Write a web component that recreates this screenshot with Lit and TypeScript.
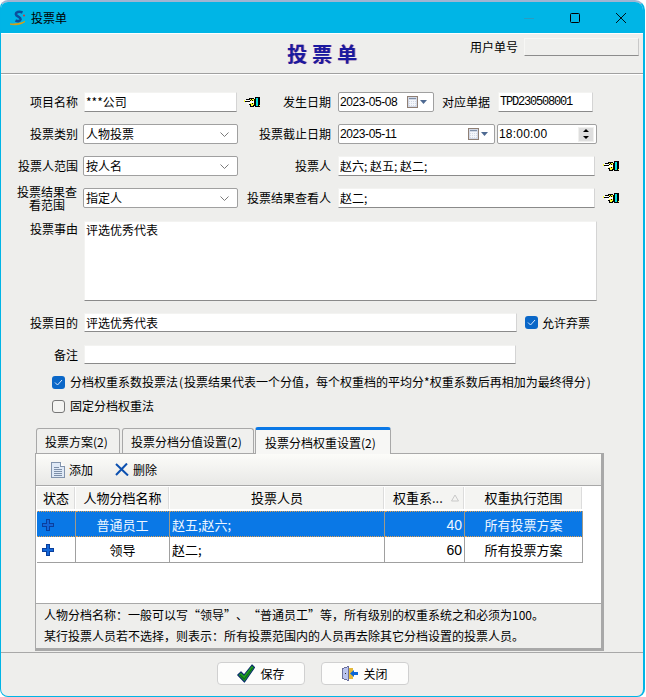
import { LitElement, html, css, svg } from "lit";
import { customElement } from "lit/decorators.js";

const hand = () => html`<svg class="hand" viewBox="0 0 17 11" width="17" height="11" shape-rendering="crispEdges">
  <path fill="#000" d="M5 1h5v1h1V0h5v10h-5V9h-1v1H6V8H5V6H2V5H0V3h2V2h3z"/>
  <path fill="#fff" d="M1 3h5v1H1zM2 5h4V4h4v2H6v1H3z" opacity="1"/>
  <path fill="#ffff30" d="M0 3h1v2H0zM6 2h1v1H6zM8 2h2v1H8zM7 3h1v1H7zM9 3h1v1H9zM6 6h2v1H6zM9 6h1v1H9zM7 7h3v1H7zM7 9h2v-1H7z"/>
  <path fill="#00e0e0" d="M12 1h2v8h-2z"/>
  <path fill="#ffff30" d="M15 8h1v1h-1z"/>
</svg>`;

const chevron = () => html`<svg class="chev" viewBox="0 0 9 5" width="9" height="5"><path d="M.5.5 4.5 4.5 8.5.5" fill="none" stroke="#7a7a7a" stroke-width="1"/></svg>`;

const cal = () => html`<svg class="cal" viewBox="0 0 21 12" width="21" height="12" shape-rendering="crispEdges">
  <rect x=".5" y=".5" width="10" height="11" fill="#d3d9e6" stroke="#8f7f74"/>
  <path d="M2 2h7v1H2z" fill="#8090a8"/>
  <path d="M2 4.500h7M2 6.500h7M2 8.500h7M3.500 4v6M5.500 4v6M7.500 4v6" stroke="#f4f6fa" fill="none"/>
  <path d="M13 4h7l-3.500 4z" fill="#4f6a92" shape-rendering="auto"/>
</svg>`;

const plus = () => html`<svg viewBox="0 0 13 13" width="12" height="12" shape-rendering="crispEdges">
  <path fill="#0a3f9c" d="M4 0h5v4h4v5H9v4H4V9H0V4h4z"/>
  <path fill="#1467d8" d="M5 1h3v4h4v3H8v4H5V8H1V5h4z"/>
</svg>`;

const doc = () => html`<svg viewBox="0 0 14 16" width="14" height="16" shape-rendering="crispEdges">
  <path d="M.5.5h9l4 4v11H.5z" fill="#dfe9f6" stroke="#8294ad"/>
  <path d="M9.500.5v4h4" fill="#fff" stroke="#8294ad"/>
  <path d="M3 5h5M3 7h8M3 9h8M3 11h8M3 13h8" stroke="#7d8fa8" fill="none"/>
</svg>`;

const del = () => html`<svg viewBox="0 0 14 13" width="14" height="13">
  <path d="M1 1 13 12.500M12 .5 1 12" stroke="#0c50b0" stroke-width="2" fill="none"/>
</svg>`;

const check = () => html`<svg viewBox="0 0 18 19" width="18" height="19">
  <path d="M.8 11 4 8 7 11 15 1 17.500 3.500 7.500 18z" fill="#1fa51f" stroke="#0b2f6a" stroke-width="1.200" stroke-linejoin="round"/>
  <path d="M3 11 7.200 15 15.500 4" fill="none" stroke="#0c6d18" stroke-width="1.200"/>
</svg>`;

const door = () => html`<svg viewBox="0 0 16 15" width="16" height="15" shape-rendering="crispEdges">
  <path d="M.5 2.500 6.500.5v14l-6-2z" fill="#b9c3ee" stroke="#6a6f9a"/>
  <path d="M7 2h4v11H7z" fill="#e3b93a"/>
  <path d="M3 7h1v1H3z" fill="#333"/>
  <path d="M8 7.500 12 4v2h4v3h-4v2z" fill="#0a66d8" shape-rendering="auto"/>
</svg>`;

const logo = () => html`<svg viewBox="0 0 16 16" width="16" height="16">
  <path d="M12.500 2.500C9 1 5.500 2 6 4.500 6.500 7 11 6.500 10.500 9.500 10 11.500 7.500 11.500 5.500 10.500" fill="none" stroke="#0c4f9c" stroke-width="2.600"/>
  <path d="M0 14C4 15.500 11 15 15 11.500 11 13.500 5 14 0 14z" fill="#f0b400" stroke="#e89a00" stroke-width=".8"/>
  <circle cx="14" cy="5.500" r="1" fill="#e03030"/>
</svg>`;

const columns = ["状态", "人物分档名称", "投票人员", "权重系...", "权重执行范围"];
const rows = [
  { name: "普通员工", people: "赵五;赵六;", weight: "40", scope: "所有投票方案", sel: true },
  { name: "领导", people: "赵二;", weight: "60", scope: "所有投票方案", sel: false },
];

const semi = (s: string) => s.split(";").map((p, i, a) => i < a.length - 1 ? html`${p}<span class="semi">;</span>` : html`${p}`);

@customElement("app-root")
export class AppRoot extends LitElement {
  static styles = css`
    :host { display: block; width: 646px; height: 697px; overflow: hidden; background: #fff; font: 12px/16px "Noto Sans CJK SC", "Liberation Sans", sans-serif; color: #000; text-spacing-trim: space-all; }
    * { box-sizing: border-box; }
    .win { width: 645px; height: 697px; border: 1px solid #00b4e6; border-right-width: 2px; border-top: 2px solid #9fb4d2; border-radius: 8px 10px 8px 8px; background: #eeeeec; overflow: hidden; display: flex; flex-direction: column; }
    .title { flex: none; height: 31px; background: #00b5e6; display: flex; align-items: center; padding-left: 9px; }
    .title .t { margin-left: 5px; }
    .wc { margin-left: auto; margin-right: -1px; display: flex; align-items: center; }
    .wc span { width: 46px; display: flex; justify-content: center; }
    .wc svg { display: block; }
    .head { flex: none; height: 41px; border-top: 1px solid #fff; border-bottom: 1px solid #a0a0a0; display: grid; grid-template-columns: 1fr auto 1fr; align-items: center; }
    .big { grid-column: 2; font-size: 20px; line-height: 26px; font-weight: 700; letter-spacing: 5px; margin-right: -5px; color: #1a1aa0; text-shadow: 1px 0 #c8206080; }
    .uid { grid-column: 3; justify-self: end; margin-right: 4px; display: flex; align-items: center; gap: 6px; margin-top: -13px; }
    .uid i { display: block; width: 115px; height: 18px; border: 1px solid #f7f7f5; border-bottom: 1px solid #8c8c8c; border-right: 1px solid #c8c8c8; background: #efefed; }
    .form { flex: none; border-top: 1px solid #fff; padding-top: 17px; display: flex; flex-direction: column; }
    .row { display: flex; align-items: center; height: 20px; margin-bottom: 12px; }
    .lab { flex: none; width: 77px; text-align: right; white-space: nowrap; }
    .lab.wrap { white-space: normal; line-height: 13px; text-align: center; width: 62px; margin-left: 15px; }
    .mlab { flex: none; text-align: right; white-space: nowrap; }
    .in { flex: none; height: 100%; background: #fff; border: 1px solid #f3f3f1; border-bottom: 1px solid #8a8a8a; border-right: 1px solid #d4d4d4; padding: 0 2px 0 1px; display: flex; align-items: center; white-space: nowrap; }
    .semi { display: inline-block; width: 6px; }
    .star { letter-spacing: 0; }
    .sel, .dt { flex: none; height: 100%; background: #fff; border: 1px solid #a0a0a0; border-radius: 2px; padding: 0 5px 0 1px; display: flex; align-items: center; white-space: nowrap; }
    .sel { width: 155px; margin-left: 5px; justify-content: space-between; padding-left: 2px; padding-right: 8px; }
    .num { font-family: "Liberation Sans", sans-serif; letter-spacing: -.4px; }
    .mono { font-family: "Liberation Mono", monospace; letter-spacing: -1.2px; }
    .hand { flex: none; display: block; }
    .dt { justify-content: space-between; }
    .spin { width: 16px; height: 15px; margin-right: -3px; background: #dedede; border: 1px solid #f0f0ee; display: flex; flex-direction: column; align-items: center; justify-content: space-around; }
    .spin b { display: block; width: 0; height: 0; border: 3px solid transparent; }
    .spin b.u { border-bottom: 3px solid #000; border-top: 0; }
    .spin b.d { border-top: 3px solid #000; border-bottom: 0; }
    .area { height: 80px; align-items: flex-start; margin-bottom: 12px; }
    .area .in { align-items: flex-start; }
    .short { height: 19px; margin-bottom: 13px; }
    .short.last { margin-bottom: 10px; }
    .cbrow { height: 16px; margin-bottom: 8px; padding-left: 51px; gap: 5px; }
    .cb { flex: none; width: 13px; height: 13px; border-radius: 3px; display: block; }
    .cb.on { background: #0a67c8; }
    .cb.off { border: 1px solid #777; background: #f4f4f2; }
    .p { padding-left: 1px; padding-right: 1px; }
    .tabs { flex: none; display: flex; align-items: flex-end; margin: 4px 0 0 35px; height: 27px; position: relative; z-index: 1; gap: 2px; }
    .tab { height: 25px; border: 1px solid #a8a8a8; border-bottom: 0; border-radius: 3px 3px 0 0; background: #f0f0ee; padding: 1px 0 0 8px; display: flex; align-items: center; white-space: nowrap; }
    .tab.t1 { width: 84px; }
    .tab.t2 { width: 132px; }
    .tab.t3 { width: 136px; height: 27px; margin-left: -1px; background: #f7f7f5; border-top: 3px solid #0a78e6; padding-left: 9px; margin-bottom: -1px; }
    .panel { flex: none; margin-left: 34px; width: 569px; height: 198px; border-top: 1px solid #a8a8a8; border-left: 1px solid #a8a8a8; border-right: 3px solid #a8a8a8; border-bottom: 3px solid #a8a8a8; display: flex; flex-direction: column; }
    .tb { flex: none; height: 32px; background: linear-gradient(#fcfcf9, #e8e8e6); border-bottom: 1px solid #a8a8a8; display: flex; align-items: center; padding-left: 15px; }
    .tb .item { display: flex; align-items: center; gap: 4px; }
    .tb .item + .item { margin-left: 22px; }
    .tb svg { display: block; }
    .gridwrap { flex: none; height: 118px; background: #fff; padding: 1px 0 0 1px; border-bottom: 1px solid #a8a8a8; font-size: 13px; }
    .grid { display: grid; grid-template-columns: 39px 94px 215px 80px 118px; width: 546px; }
    .hc { height: 24px; background: #f4f4f2; border-right: 1px solid #fff; border-bottom: 2px solid #fff; box-shadow: inset -1px 0 #dcdcdc; display: flex; align-items: center; justify-content: center; position: relative; padding-bottom: 1px; }
    .hc.left { justify-content: flex-start; padding-left: 8px; }
    .sort { position: absolute; right: 5px; top: 7px; width: 8px; height: 8px; }
    .c { height: 26px; border-right: 1px solid #a0a0a0; border-bottom: 1px solid #a0a0a0; display: flex; align-items: center; justify-content: center; background: #fff; padding-top: 1px; }
    .c.l { justify-content: flex-start; padding-left: 2px; }
    .c.r { justify-content: flex-end; padding-right: 2px; font-family: "Liberation Sans", sans-serif; font-size: 14px; }
    .c.sel-row { background: #0a78e6; color: #eef6ff; border-top: 1px dotted #e0a050; border-bottom: 1px dotted #e0a050; border-right-color: #a09a88; }
    .c.ico { justify-content: flex-start; padding-left: 5px; }
    .c.ico svg { display: block; }
    .note { flex: 1; padding: 0 0 0 8px; line-height: 21px; white-space: nowrap; background: #eeeeec; }
    .foot { flex: 1; margin-top: 1px; border-top: 1px solid #a8a8a8; display: flex; padding: 9px 0 0 216px; gap: 16px; }
    .btn { width: 88px; height: 23px; background: #fdfdfc; border: 1px solid #d0d0d0; border-radius: 4px; display: flex; align-items: center; justify-content: center; gap: 5px; }
    .btn svg { display: block; }
  `;

  render() {
    return html`<div class="win" lang="zh-CN">
      <div class="title">${logo()}<span class="t">投票单</span>
        <div class="wc">
          <span><svg width="10" height="10"><path d="M0 5.500h10" stroke="#2a9cc0"/></svg></span>
          <span><svg width="10" height="10"><rect x=".5" y=".5" width="9" height="9" rx="1" fill="none" stroke="#000"/></svg></span>
          <span><svg width="10" height="10"><path d="M0 0 10 10M10 0 0 10" stroke="#000" stroke-width=".9"/></svg></span>
        </div>
      </div>
      <div class="head">
        <div class="big">投票单</div>
        <div class="uid"><span>用户单号</span><i></i></div>
      </div>
      <div class="form">
        <div class="row">
          <div class="lab">项目名称</div>
          <div class="in" style="width:153px;margin-left:6px">***公司</div>
          <span style="width:7px"></span>${hand()}
          <div class="mlab" style="width:70px">发生日期</div>
          <div class="dt" style="width:96px;margin-left:7px"><span class="num">2023-05-08</span>${cal()}</div>
          <div class="mlab" style="width:56px">对应单据</div>
          <div class="in mono" style="width:95px;margin-left:8px">TPD230508001</div>
        </div>
        <div class="row">
          <div class="lab">投票类别</div>
          <div class="sel"><span>人物投票</span>${chevron()}</div>
          <div class="mlab" style="width:93px">投票截止日期</div>
          <div class="dt" style="width:157px;margin-left:7px"><span class="num">2023-05-11</span>${cal()}</div>
          <div class="dt" style="width:100px;margin-left:2px"><span class="num" style="letter-spacing:.2px">18:00:00</span><div class="spin"><b class="u"></b><b class="d"></b></div></div>
        </div>
        <div class="row">
          <div class="lab">投票人范围</div>
          <div class="sel"><span>按人名</span>${chevron()}</div>
          <div class="mlab" style="width:93px">投票人</div>
          <div class="in" style="width:257px;margin-left:7px"><span>${semi("赵六;赵五;赵二;")}</span></div>
          <span style="width:8px"></span>${hand()}
        </div>
        <div class="row" style="margin-bottom:13px">
          <div class="lab wrap">投票结果查看范围</div>
          <div class="sel"><span>指定人</span>${chevron()}</div>
          <div class="mlab" style="width:93px">投票结果查看人</div>
          <div class="in" style="width:257px;margin-left:7px"><span>${semi("赵二;")}</span></div>
          <span style="width:8px"></span>${hand()}
        </div>
        <div class="row area">
          <div class="lab">投票事由</div>
          <div class="in" style="width:513px;margin-left:6px">评选优秀代表</div>
        </div>
        <div class="row short">
          <div class="lab">投票目的</div>
          <div class="in" style="width:433px;margin-left:6px">评选优秀代表</div>
          <span class="cb on" style="margin-left:8px">${this.tick()}</span>
          <span style="margin-left:4px">允许弃票</span>
        </div>
        <div class="row short last">
          <div class="lab">备注</div>
          <div class="in" style="width:432px;margin-left:6px"></div>
        </div>
        <div class="row cbrow"><span class="cb on">${this.tick()}</span><span>分档权重系数投票法<span class="p">(</span>投票结果代表一个分值，每个权重档的平均分*权重系数后再相加为最终得分<span class="p">)</span></span></div>
        <div class="row cbrow"><span class="cb off"></span><span>固定分档权重法</span></div>
      </div>
      <div class="tabs">
        <div class="tab t1">投票方案(2)</div>
        <div class="tab t2">投票分档分值设置(2)</div>
        <div class="tab t3">投票分档权重设置(2)</div>
      </div>
      <div class="panel">
        <div class="tb">
          <div class="item">${doc()}<span>添加</span></div>
          <div class="item">${del()}<span>删除</span></div>
        </div>
        <div class="gridwrap">
          <div class="grid">
            ${columns.map((c, i) => html`<div class="hc ${i === 3 ? "left" : ""}">${c}${i === 3 ? html`<svg class="sort" viewBox="0 0 8 8"><path d="M4 1 7.500 7H.5z" fill="none" stroke="#c8c8c8"/></svg>` : ""}</div>`)}
            ${rows.map((r) => {
              const s = r.sel ? "sel-row" : "";
              return html`<div class="c ico ${s}">${plus()}</div>
                <div class="c ${s}">${r.name}</div>
                <div class="c l ${s}">${r.people}</div>
                <div class="c r ${s}">${r.weight}</div>
                <div class="c ${s}">${r.scope}</div>`;
            })}
          </div>
        </div>
        <div class="note">人物分档名称：一般可以写“领导”、“普通员工”等，所有级别的权重系统之和必须为100。<br>某行投票人员若不选择，则表示：所有投票范围内的人员再去除其它分档设置的投票人员。</div>
      </div>
      <div class="foot">
        <div class="btn">${check()}<span>保存</span></div>
        <div class="btn">${door()}<span>关闭</span></div>
      </div>
    </div>`;
  }

  tick() {
    return svg`<svg viewBox="0 0 13 13" width="13" height="13" style="display:block"><path d="M3 6.500 5.500 9 10 4" fill="none" stroke="#d8e8ff" stroke-width="1"/></svg>`;
  }
}
